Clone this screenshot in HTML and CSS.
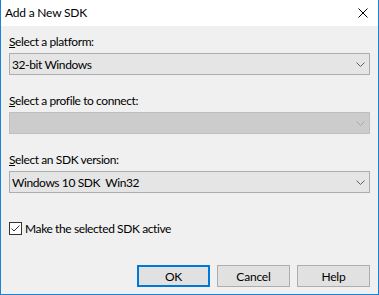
FILE: index.html
```html
<!DOCTYPE html>
<html lang="en">
  <head>
    <meta charset="UTF-8" />
    <title>Add a New SDK</title>
    <link rel="stylesheet" href="styles.css">
  </head>
  <body>
    <div class="window">
      <div class="title-bar">
        <span class="title">Add a New SDK</span>
        <svg class="close" width="10" height="10" viewBox="0 0 10 10">
          <path d="M0.5 0.5 L9.5 9.5 M9.5 0.5 L0.5 9.5" stroke="#000" stroke-width="1" fill="none" />
        </svg>
      </div>

      <div class="content">
        <div class="field-label"><u>S</u>elect a platform:</div>
        <div class="combo">
          <span class="combo-text">32-bit Windows</span>
          <svg class="chevron" width="9" height="5" viewBox="0 0 9 5">
            <polyline points="0.5,0.5 4.5,4.5 8.5,0.5" fill="none" stroke="#606060" stroke-width="1" />
          </svg>
        </div>

        <div class="field-label spaced"><u>S</u>elect a profile to connect:</div>
        <div class="combo disabled">
          <span class="combo-text"></span>
          <svg class="chevron" width="9" height="5" viewBox="0 0 9 5">
            <polyline points="0.5,0.5 4.5,4.5 8.5,0.5" fill="none" stroke="#a8a8a8" stroke-width="1" />
          </svg>
        </div>

        <div class="field-label spaced"><u>S</u>elect an SDK version:</div>
        <div class="combo">
          <span class="combo-text">Windows 10 SDK&nbsp; Win32</span>
          <svg class="chevron" width="9" height="5" viewBox="0 0 9 5">
            <polyline points="0.5,0.5 4.5,4.5 8.5,0.5" fill="none" stroke="#606060" stroke-width="1" />
          </svg>
        </div>

        <label class="check-row">
          <span class="checkbox">
            <svg width="11" height="11" viewBox="0 0 11 11">
              <polyline points="1.5,5.5 4,8 9.5,2.5" fill="none" stroke="#333" stroke-width="1" />
            </svg>
          </span>
          <span>Make the selected SDK active</span>
        </label>

        <div class="buttons">
          <button class="default">OK</button>
          <button>Cancel</button>
          <button>Help</button>
        </div>
      </div>
    </div>
  </body>
</html>
```

FILE: styles.css
```css
body {
  margin: 0;
  padding: 0;
  font-family: Lato, 'Noto Sans', sans-serif;
  font-size: 12px;
  letter-spacing: -0.4px;
  color: #000;
  background-color: #f0f0f0;
}

.window {
  width: 377px;
  height: 294px;
  border: 1px solid #1883d7;
  border-top: none;
  background-color: #f0f0f0;
  display: flex;
  flex-direction: column;
}

.title-bar {
  height: 26px;
  background-color: #fff;
  display: flex;
  align-items: center;
  justify-content: space-between;
  padding: 0 10px 0 4px;
}

.title {
  font-size: 12px;
  line-height: 15px;
  letter-spacing: -0.2px;
  margin-top: -1px;
}

.close {
  display: block;
}

.content {
  flex: 1;
  display: flex;
  flex-direction: column;
  padding: 8px 8px 0 8px;
}

.field-label {
  line-height: 15px;
  height: 15px;
  margin-bottom: 4px;
}

.field-label.spaced {
  margin-top: 18px;
}

.combo {
  height: 20px;
  border: 1px solid #adadad;
  background-color: #e5e5e5;
  display: flex;
  align-items: center;
  justify-content: space-between;
  padding: 0 4px 0 2px;
}

.combo.disabled {
  background-color: #cccccc;
  border-color: #bfbfbf;
}

.combo-text {
  line-height: 15px;
}

.chevron {
  display: block;
  margin-top: 1px;
}

.check-row {
  display: flex;
  align-items: center;
  gap: 3px;
  margin-top: 28px;
  line-height: 15px;
}

.checkbox {
  width: 11px;
  height: 11px;
  border: 1px solid #333;
  background-color: #fff;
  display: flex;
}

.buttons {
  display: flex;
  justify-content: flex-end;
  gap: 7px;
  margin-top: 29px;
}

button {
  width: 73px;
  height: 22px;
  padding: 0;
  border: 1px solid #adadad;
  background-color: #e1e1e1;
  font-family: Lato, 'Noto Sans', sans-serif;
  font-size: 12px;
  letter-spacing: -0.2px;
  color: #000;
}

button.default {
  border: 2px solid #0078d7;
}
```
